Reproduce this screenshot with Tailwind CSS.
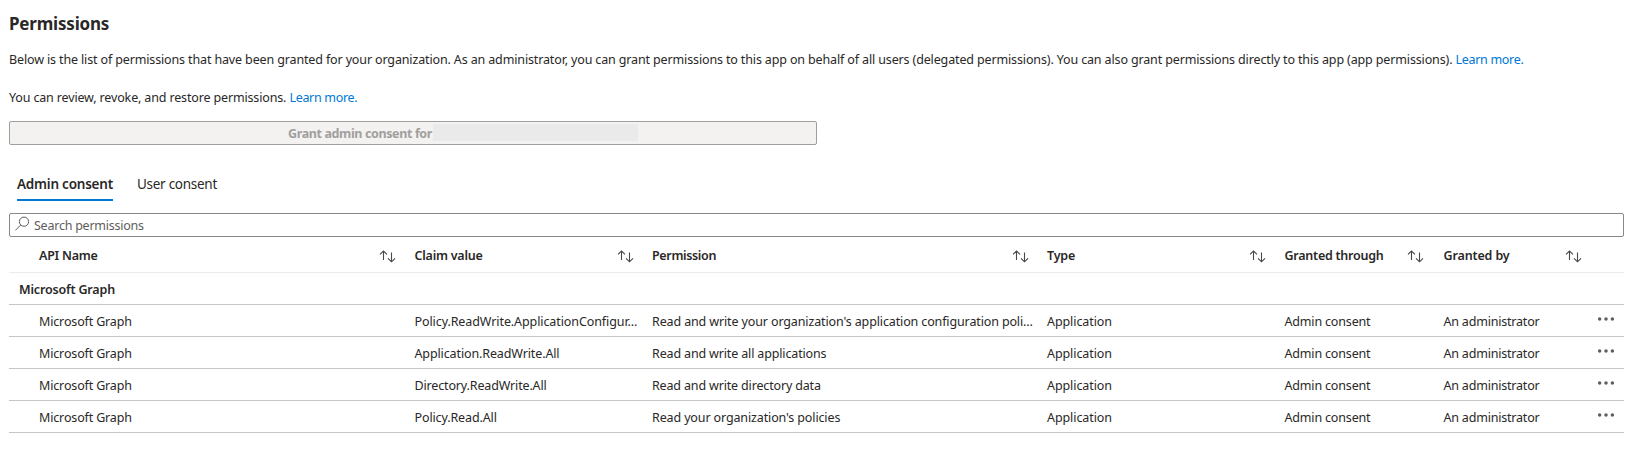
<!DOCTYPE html>
<html lang="en">
<head>
<meta charset="utf-8">
<title>Permissions</title>
<script src="https://cdn.jsdelivr.net/npm/@tailwindcss/browser@4"></script>
</head>
<body class="bg-white font-['Noto_Sans',sans-serif] text-[12.5px] text-[#292827]">
<svg class="hidden">
  <symbol id="sort" viewBox="0 0 17 13">
    <path d="M4.5 10V1M1 4.4L4.5 1L8 4.4M12.5 2.5V11.6M9 8.4L12.5 11.8L16 8.4" fill="none" stroke="#4a4948" stroke-width="1.1"/>
  </symbol>
  <symbol id="more" viewBox="0 0 18 6">
    <circle cx="2.6" cy="3" r="1.75"/><circle cx="9" cy="3" r="1.75"/><circle cx="15.4" cy="3" r="1.75"/>
  </symbol>
</svg>
<main class="flex h-[460px] w-[1624px] flex-col pl-[9px]">
  <h1 class="mt-3 h-6 text-[17px] leading-6 font-bold tracking-[-0.2px]">Permissions</h1>
  <p class="mt-3.5 h-5 leading-5 whitespace-nowrap tracking-[-0.138px]">Below is the list of permissions that have been granted for your organization. As an administrator, you can grant permissions to this app on behalf of all users (delegated permissions). You can also grant permissions directly to this app (app permissions). <a class="tracking-[-0.3px] text-[#0078d4]">Learn more.</a></p>
  <p class="mt-[18px] h-5 leading-5 whitespace-nowrap tracking-[-0.15px]">You can review, revoke, and restore permissions. <a class="tracking-[-0.3px] text-[#0078d4]">Learn more.</a></p>
  <button class="mt-[13px] flex h-6 w-[808px] items-center rounded-[2px] border border-[#a19f9d] bg-[#f3f2f1] pl-[278px] font-bold text-[#a19f9d]">
    <span class="pt-0.5 tracking-[-0.37px]">Grant admin consent for</span><span class="-mt-px ml-px h-[17px] w-[205px] bg-[#eaeaea]"></span>
  </button>
  <nav class="mt-7 ml-2 flex h-7 gap-6 text-[13.5px] leading-[22px]">
    <span class="h-7 w-24 border-b-2 border-[#0078d4] font-semibold whitespace-nowrap tracking-[-0.22px]">Admin consent</span>
    <span class="tracking-[-0.275px]">User consent</span>
  </nav>
  <div class="mt-3 flex h-6 items-center rounded-[2px] border border-[#8a8886] pl-[5px] text-[#605e5c]">
    <svg class="-mt-[3px] mr-1 size-[15px]" viewBox="0 0 15 15" fill="none" stroke="#605e5c"><circle cx="9" cy="5.7" r="4.6"/><path d="M5.7 9L0.3 14.4"/></svg>
    <span class="pt-0.5 tracking-[-0.24px]">Search permissions</span>
  </div>
  <div class="grid h-9 grid-cols-[376px_237px_395px_238px_159px_158px_52px] items-center border-b border-[#edebe9] pt-1 font-semibold">
    <div class="flex items-center justify-between pl-[30px]"><span class="tracking-[-0.25px]">API Name</span><svg class="-mr-[11px] h-[13px] w-[17px]"><use href="#sort"/></svg></div>
    <div class="flex items-center justify-between pl-[29.5px]"><span class="tracking-[-0.23px]">Claim value</span><svg class="-mr-[12px] h-[13px] w-[17px]"><use href="#sort"/></svg></div>
    <div class="flex items-center justify-between pl-[30px]"><span class="tracking-[-0.35px]">Permission</span><svg class="-mr-[12px] h-[13px] w-[17px]"><use href="#sort"/></svg></div>
    <div class="flex items-center justify-between pl-[30px]"><span class="tracking-[-0.2px]">Type</span><svg class="-mr-[11px] h-[13px] w-[17px]"><use href="#sort"/></svg></div>
    <div class="flex items-center justify-between pl-[29.5px]"><span class="tracking-[-0.247px]">Granted through</span><svg class="-mr-[10px] h-[13px] w-[17px]"><use href="#sort"/></svg></div>
    <div class="flex items-center justify-between pl-[29.5px]"><span class="tracking-[-0.14px]">Granted by</span><svg class="-mr-[10px] h-[13px] w-[17px]"><use href="#sort"/></svg></div>
  </div>
  <div class="flex h-8 items-center border-b border-[#c8c6c4] pt-1 pl-2.5 font-semibold tracking-[-0.17px]">Microsoft Graph</div>
  <div class="grid h-8 grid-cols-[376px_237px_395px_238px_159px_158px_52px] items-center border-b border-[#c8c6c4] pt-1 whitespace-nowrap">
    <span class="pl-[30px] tracking-[-0.15px]">Microsoft Graph</span><span class="pl-[29.5px] tracking-[-0.09px]">Policy.ReadWrite.ApplicationConfigur…</span><span class="pl-[30px] tracking-[-0.13px]">Read and write your organization's application configuration poli…</span><span class="pl-[30px] tracking-[-0.08px]">Application</span><span class="pl-[29.5px] tracking-[-0.17px]">Admin consent</span><span class="pl-[29.5px] tracking-[-0.2px]">An administrator</span><svg class="-mt-[7px] ml-[25px] h-1.5 w-[18px] fill-[#605e5c]"><use href="#more"/></svg>
  </div>
  <div class="grid h-8 grid-cols-[376px_237px_395px_238px_159px_158px_52px] items-center border-b border-[#c8c6c4] pt-1 whitespace-nowrap">
    <span class="pl-[30px] tracking-[-0.15px]">Microsoft Graph</span><span class="pl-[29.5px] tracking-[-0.12px]">Application.ReadWrite.All</span><span class="pl-[30px] tracking-[-0.15px]">Read and write all applications</span><span class="pl-[30px] tracking-[-0.08px]">Application</span><span class="pl-[29.5px] tracking-[-0.17px]">Admin consent</span><span class="pl-[29.5px] tracking-[-0.2px]">An administrator</span><svg class="-mt-[7px] ml-[25px] h-1.5 w-[18px] fill-[#605e5c]"><use href="#more"/></svg>
  </div>
  <div class="grid h-8 grid-cols-[376px_237px_395px_238px_159px_158px_52px] items-center border-b border-[#c8c6c4] pt-1 whitespace-nowrap">
    <span class="pl-[30px] tracking-[-0.15px]">Microsoft Graph</span><span class="pl-[29.5px] tracking-[-0.15px]">Directory.ReadWrite.All</span><span class="pl-[30px] tracking-[-0.16px]">Read and write directory data</span><span class="pl-[30px] tracking-[-0.08px]">Application</span><span class="pl-[29.5px] tracking-[-0.17px]">Admin consent</span><span class="pl-[29.5px] tracking-[-0.2px]">An administrator</span><svg class="-mt-[7px] ml-[25px] h-1.5 w-[18px] fill-[#605e5c]"><use href="#more"/></svg>
  </div>
  <div class="grid h-8 grid-cols-[376px_237px_395px_238px_159px_158px_52px] items-center border-b border-[#c8c6c4] pt-1 whitespace-nowrap">
    <span class="pl-[30px] tracking-[-0.15px]">Microsoft Graph</span><span class="pl-[29.5px] tracking-[-0.12px]">Policy.Read.All</span><span class="pl-[30px] tracking-[-0.13px]">Read your organization's policies</span><span class="pl-[30px] tracking-[-0.08px]">Application</span><span class="pl-[29.5px] tracking-[-0.17px]">Admin consent</span><span class="pl-[29.5px] tracking-[-0.2px]">An administrator</span><svg class="-mt-[7px] ml-[25px] h-1.5 w-[18px] fill-[#605e5c]"><use href="#more"/></svg>
  </div>
</main>
</body>
</html>
